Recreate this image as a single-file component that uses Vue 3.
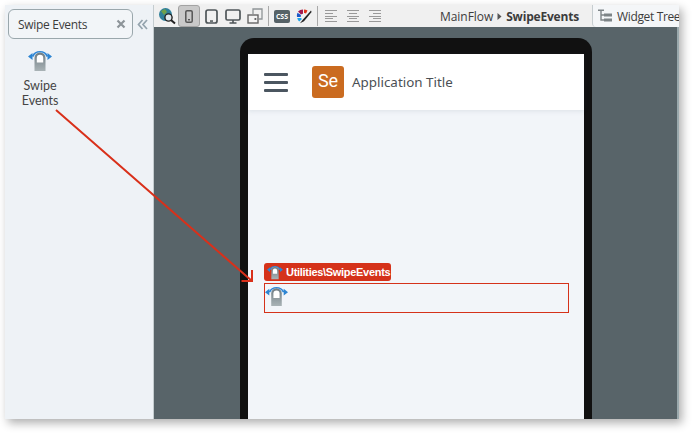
<template>
  <div class="page">
    <div class="window">
      <!-- Left toolbox -->
      <aside class="sidebar">
        <div class="search-row">
          <div class="search-box">
            <span>Swipe Events</span>
            <svg class="clear" width="10" height="10" viewBox="0 0 10 10"><path d="M1.5 1.5l7 7M8.5 1.5l-7 7" stroke="#8d9499" stroke-width="2.2" /></svg>
          </div>
          <svg class="collapse" width="11" height="11" viewBox="0 0 11 11"><path d="M5.5 1L1.5 5.5l4 4.5M10 1L6 5.5l4 4.5" fill="none" stroke="#94a3ad" stroke-width="1.7" /></svg>
        </div>
        <div class="widget">
          <svg class="swipe" width="24" height="24" viewBox="0 0 24 24">
            <use href="#swipe-icon" />
          </svg>
          <div class="widget-label">Swipe<br>Events</div>
        </div>
      </aside>

      <main class="main">
        <!-- Toolbar -->
        <div class="toolbar">
          <div class="tools">
            <svg class="tool" width="18" height="18" viewBox="0 0 18 18">
              <circle cx="7.5" cy="7.5" r="6.5" fill="#2f7f9a" />
              <path d="M3 4l4-2 2 3-3 3zM8 9l4-1 1 2-3 3z" fill="#6fa04a" />
              <circle cx="10.5" cy="10.5" r="3.6" fill="#dfe8ee" stroke="#222" stroke-width="1.4" />
              <path d="M13 13l4 3.5" stroke="#222" stroke-width="2" />
            </svg>
            <div class="tool-btn active">
              <svg width="8" height="13" viewBox="0 0 8 13"><rect x="0.8" y="0.8" width="6.4" height="11.4" rx="1.3" fill="none" stroke="#555" stroke-width="1.5" /><rect x="3" y="9" width="2" height="1.4" fill="#555" /></svg>
            </div>
            <svg class="tool tablet" width="13" height="15" viewBox="0 0 13 15"><rect x="1" y="1" width="11" height="13" rx="2" fill="none" stroke="#4f5659" stroke-width="1.7" /><rect x="5" y="11.3" width="3" height="1.5" fill="#4f5659" /></svg>
            <svg class="tool desktop" width="16" height="15" viewBox="0 0 16 15"><rect x="1" y="1" width="14" height="10" rx="1.5" fill="none" stroke="#4f5659" stroke-width="1.7" /><path d="M8 11v2.5M4.5 14h7" stroke="#4f5659" stroke-width="1.6" /></svg>
            <svg class="tool rotate" width="16" height="16" viewBox="0 0 16 16"><path d="M6 6V1h9v10h-3" fill="none" stroke="#8f9496" stroke-width="1.3" /><rect x="1" y="7" width="10" height="8" fill="#f4f4f4" stroke="#666" stroke-width="1.4" /><rect x="7.5" y="10" width="1.8" height="2" fill="#666" /></svg>
            <span class="sep"></span>
            <span class="css-badge">CSS</span>
            <svg class="tool" width="16" height="16" viewBox="0 0 16 16">
              <path d="M7 1.5A7 7 0 0 0 2 3.5L5 6.5A3 3 0 0 1 7 5.7z" fill="#a11a50" />
              <path d="M8 1.5a7 7 0 0 1 3.5 1L10 5.6a3 3 0 0 0-2-.5z" fill="#e0341c" />
              <path d="M1.5 4.8A7 7 0 0 0 1 9h3.8a3 3 0 0 1 .2-2z" fill="#1c58c8" />
              <path d="M1.2 10a7 7 0 0 0 2 3.5L6 11a3 3 0 0 1-1-1z" fill="#1ea3e8" />
              <path d="M15 2.5L6.5 12 4 15.3l4-2L15.6 4z" fill="#222" />
            </svg>
            <span class="sep"></span>
            <div class="aligns">
              <div v-for="kind in aligns" :key="kind" class="align" :class="kind">
                <i v-for="(n, idx) in lineWidths" :key="idx" :style="{ width: n + 'px' }"></i>
              </div>
            </div>
          </div>
          <div class="crumbs">
            <span>MainFlow</span>
            <svg width="5" height="7" viewBox="0 0 5 7"><path d="M0.5 0L4.5 3.5 0.5 7z" fill="#555" /></svg>
            <b>SwipeEvents</b>
          </div>
          <div class="tree-tab">
            <svg width="14" height="14" viewBox="0 0 14 14">
              <path d="M0 1.2h6M3 1.2v9.8h3M3 6h3" fill="none" stroke="#7d8487" stroke-width="1.4" />
              <rect x="6" y="4.5" width="8" height="3" fill="#7d8487" />
              <rect x="6" y="9.5" width="8" height="3" fill="#7d8487" />
            </svg>
            <span>Widget Tree</span>
          </div>
        </div>

        <!-- Canvas with device frame -->
        <div class="canvas">
          <div class="device">
            <div class="screen">
              <header class="app-header">
                <div class="burger"><i></i><i></i><i></i></div>
                <div class="logo">Se</div>
                <div class="app-title">Application Title</div>
              </header>
              <div class="content">
                <div class="block-tag">
                  <svg class="swipe" width="16" height="16" viewBox="0 0 24 24"><use href="#swipe-icon" /></svg>
                  <span>Utilities\SwipeEvents</span>
                </div>
                <div class="block-box">
                  <svg class="swipe" width="23" height="23" viewBox="0 0 24 24"><use href="#swipe-icon" /></svg>
                </div>
              </div>
            </div>
          </div>
        </div>
      </main>
    </div>

    <!-- Annotation arrow over the screenshot -->
    <svg class="arrow" width="694" height="434" viewBox="0 0 694 434">
      <path d="M56 110L252 281M241.500 281L252 281 252 270" fill="none" stroke="#d9301a" stroke-width="2" />
    </svg>

    <svg width="0" height="0" class="defs">
      <defs>
        <linearGradient id="swipe-body" x1="0" y1="0" x2="0" y2="1">
          <stop offset="0" stop-color="#6f7c82" />
          <stop offset="1" stop-color="#a9b3b6" />
        </linearGradient>
        <g id="swipe-icon">
          <path d="M4.500 8.500A8.500 8.500 0 0 1 19.500 8.500" fill="none" stroke="#2f86d6" stroke-width="1.8" />
          <path d="M6.500 8A6.500 6.500 0 0 1 17.500 8" fill="none" stroke="#bcdcf4" stroke-width="1.2" />
          <path d="M4.500 5v7L0 8.500zM19.500 5v7L24 8.500z" fill="#2d85d2" />
          <path d="M6.500 23V10a5.500 5.500 0 0 1 11 0V23z" fill="url(#swipe-body)" />
          <path d="M8.800 14.500V10a3.200 3.200 0 0 1 6.400 0V14.500z" fill="#fff" />
        </g>
      </defs>
    </svg>
  </div>
</template>

<script setup>
const aligns = ['left', 'center', 'right']
const lineWidths = [12, 8, 12, 8, 12]
</script>

<style>
html, body {
  margin: 0;
  background: #fff;
}
</style>

<style scoped>
.page {
  position: relative;
  width: 694px;
  height: 434px;
  overflow: hidden;
  background: #fff;
  font-family: "Open Sans", "Noto Sans", sans-serif;
  color: #333;
}

.window {
  margin: 5px 0 0 5px;
  width: 674px;
  height: 414px;
  display: flex;
  box-shadow: 3px 4px 9px rgba(0, 0, 0, 0.32);
}

.sidebar {
  width: 149px;
  flex: none;
  box-sizing: border-box;
  background: #eef2f6;
  border-right: 1px solid #c4cccf;
}

.search-row {
  display: flex;
  align-items: center;
  padding: 4px 0 0 3px;
}

.search-box {
  width: 125px;
  height: 30px;
  box-sizing: border-box;
  border: 1px solid #9aa7ac;
  border-radius: 6px;
  background: #f2f5f8;
  display: flex;
  align-items: center;
  justify-content: space-between;
  padding: 0 6px 0 9px;
  font-size: 12px;
  letter-spacing: -0.3px;
  color: #3c3c3c;
}

.collapse {
  margin-left: 4px;
}

.swipe {
  flex: none;
}

.widget {
  width: 70px;
  margin-top: 9px;
  display: flex;
  flex-direction: column;
  align-items: center;
}

.widget-label {
  margin-top: 6px;
  font-family: Lato, "Open Sans", sans-serif;
  font-size: 12.5px;
  line-height: 15px;
  text-align: center;
  color: #444;
}

.main {
  flex: 1;
  min-width: 0;
  display: flex;
  flex-direction: column;
}

.toolbar {
  height: 22px;
  flex: none;
  display: flex;
  align-items: center;
  background: #f0f0f0;
}

.tools {
  display: flex;
  align-items: center;
  padding-left: 4px;
  width: 278px;
  flex: none;
  box-sizing: border-box;
}

.tool {
  flex: none;
}

.tool-btn {
  width: 22px;
  height: 22px;
  margin-left: 2px;
  box-sizing: border-box;
  background: #c9c9c9;
  border: 1px solid #a3a3a3;
  border-radius: 3px;
  display: flex;
  align-items: center;
  justify-content: center;
}

.tablet {
  margin-left: 5px;
}

.desktop {
  margin-left: 7px;
}

.rotate {
  margin-left: 6px;
}

.sep {
  width: 1px;
  height: 20px;
  margin: 0 5px;
  background: #a9a9a9;
}

.css-badge {
  width: 16px;
  height: 13px;
  background: #566267;
  border-radius: 2px;
  color: #fff;
  font-size: 7px;
  font-weight: 700;
  line-height: 13px;
  text-align: center;
  margin-right: 6px;
}

.aligns {
  display: flex;
  gap: 10px;
  margin-left: 2px;
}

.align {
  width: 12px;
  display: flex;
  flex-direction: column;
  gap: 1.6px;
}

.align i {
  display: block;
  height: 1px;
  background: #999;
}

.align.center {
  align-items: center;
}

.align.right {
  align-items: flex-end;
}

.crumbs {
  flex: 1;
  display: flex;
  align-items: center;
  gap: 4px;
  padding-left: 8px;
  font-size: 12px;
  letter-spacing: -0.05px;
  color: #3c3c3c;
  white-space: nowrap;
}

.crumbs b {
  font-weight: 700;
  letter-spacing: -0.2px;
}

.tree-tab {
  width: 87px;
  height: 22px;
  flex: none;
  box-sizing: border-box;
  display: flex;
  align-items: center;
  gap: 5px;
  padding-left: 5px;
  border-left: 1px solid #c6cdd0;
  border-bottom-left-radius: 4px;
  background: #f4f6f8;
  font-size: 12px;
  letter-spacing: -0.35px;
  color: #3c3c3c;
  white-space: nowrap;
  overflow: hidden;
}

.tree-tab svg {
  flex: none;
}

.canvas {
  flex: 1;
  min-height: 0;
  background: #586469;
  border-right: 2px solid #9aa9ad;
  overflow: hidden;
  padding: 11px 0 0 86px;
}

.device {
  width: 352px;
  height: 381px;
  box-sizing: border-box;
  background: #111;
  border-radius: 14px 14px 0 0;
  padding: 16px 8px 0;
}

.screen {
  height: 100%;
  background: #f2f5f9;
}

.app-header {
  height: 56px;
  display: flex;
  align-items: center;
  padding-left: 16px;
  background: #fff;
  box-shadow: 0 1px 5px rgba(60, 80, 100, 0.12);
}

.burger {
  width: 24px;
  display: flex;
  flex-direction: column;
  gap: 5px;
}

.burger i {
  display: block;
  height: 3px;
  border-radius: 1px;
  background: #4b5660;
}

.logo {
  width: 32px;
  height: 32px;
  margin-left: 24px;
  border-radius: 3px;
  background: #ca6b20;
  color: #fff;
  font-family: Roboto, sans-serif;
  font-size: 18px;
  line-height: 30px;
  text-align: center;
}

.app-title {
  margin-left: 8px;
  font-family: "Noto Sans", sans-serif;
  font-size: 13.4px;
  color: #4a4f54;
}

.content {
  padding: 153px 15px 0 16px;
}

.block-tag {
  width: 127px;
  height: 18px;
  box-sizing: border-box;
  background: #d5321a;
  border-radius: 3px;
  color: #fff;
  display: flex;
  align-items: center;
  gap: 3px;
  padding-left: 3px;
  font-family: "Liberation Sans", sans-serif;
  font-size: 11px;
  font-weight: 700;
  letter-spacing: -0.3px;
  white-space: nowrap;
}

.block-box {
  height: 30px;
  margin-top: 2px;
  box-sizing: border-box;
  border: 1px solid #d5321a;
}

.block-box svg {
  display: block;
}

.arrow {
  position: absolute;
  left: 0;
  top: 0;
  pointer-events: none;
}

.defs {
  position: absolute;
}
</style>
